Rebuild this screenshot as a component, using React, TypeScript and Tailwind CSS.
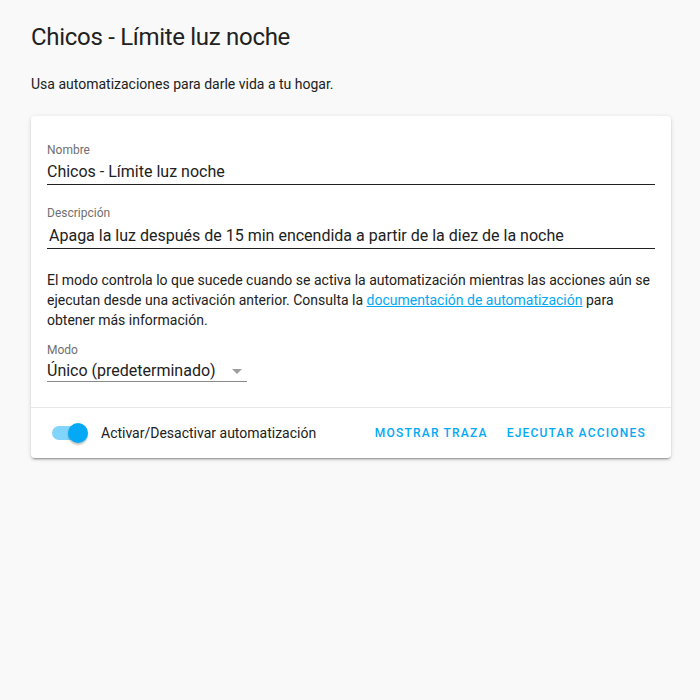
export default function App() {
  return (
    <div
      className="min-h-[700px] bg-[#f8f9f8] px-[31px] text-[#212121]"
      style={{ fontFamily: 'Roboto, "Noto Sans", sans-serif' }}
    >
      <h1 className="pt-[21px] text-[24px] leading-[32px] font-normal tracking-[-0.3px]">Chicos - Límite luz noche</h1>
      <p className="mt-[21px] text-[14px] leading-[20px]">Usa automatizaciones para darle vida a tu hogar.</p>

      <div className="mt-[22px] w-[640px] rounded-[4px] bg-white shadow-[0_2px_2px_0_rgba(0,0,0,0.14),0_1px_5px_0_rgba(0,0,0,0.12),0_3px_1px_-2px_rgba(0,0,0,0.2)]">
        <div className="px-4 pt-[26px] pb-[25px]">
          <div className="border-b border-[#212121] pb-[2px]">
            <div className="text-[12px] leading-[16px] text-[#6f6f6f]">Nombre</div>
            <div className="pt-[4px] text-[16px] leading-[20px]">Chicos - Límite luz noche</div>
          </div>

          <div className="mt-[20px] border-b border-[#212121] pb-[2px]">
            <div className="text-[12px] leading-[16px] text-[#6f6f6f]">Descripción</div>
            <div className="pt-[5px] pl-[2px] text-[16px] leading-[20px]">
              Apaga la luz después de 15 min encendida a partir de la diez de la noche
            </div>
          </div>

          <p className="mt-[21px] text-[14px] leading-[20px]">
            El modo controla lo que sucede cuando se activa la automatización mientras las acciones aún se
            ejecutan desde una activación anterior. Consulta la{' '}
            <a className="text-[#03a9f4] underline">documentación de automatización</a> para obtener más
            información.
          </p>

          <div className="mt-[12px] w-[200px] border-b border-[#8a8a8a]">
            <div className="text-[12px] leading-[16px] text-[#6f6f6f]">Modo</div>
            <div className="flex items-center justify-between pt-[3px]">
              <span className="text-[16px] leading-[20px]">Único (predeterminado)</span>
              <svg width="10" height="5" viewBox="0 0 10 5" className="mr-[5px]">
                <path d="M0 0 L10 0 L5 5 Z" fill="#9e9e9e" />
              </svg>
            </div>
          </div>
        </div>

        <div className="flex h-[51px] items-center border-t border-[#e8e8e8] pr-[25px] pl-[21px]">
          <div className="relative h-[14px] w-[34px] rounded-full bg-[#81d4fa]">
            <div className="absolute top-[-3px] right-[-2px] h-[20px] w-[20px] rounded-full bg-[#03a9f4] shadow-[0_2px_2px_rgba(0,0,0,0.24)]" />
          </div>
          <span className="ml-[15px] text-[14px] leading-[20px]">Activar/Desactivar automatización</span>
          <div className="ml-auto flex gap-[19px] text-[12px] font-medium tracking-[1.2px] text-[#03a9f4]">
            <span>MOSTRAR TRAZA</span>
            <span>EJECUTAR ACCIONES</span>
          </div>
        </div>
      </div>
    </div>
  )
}
